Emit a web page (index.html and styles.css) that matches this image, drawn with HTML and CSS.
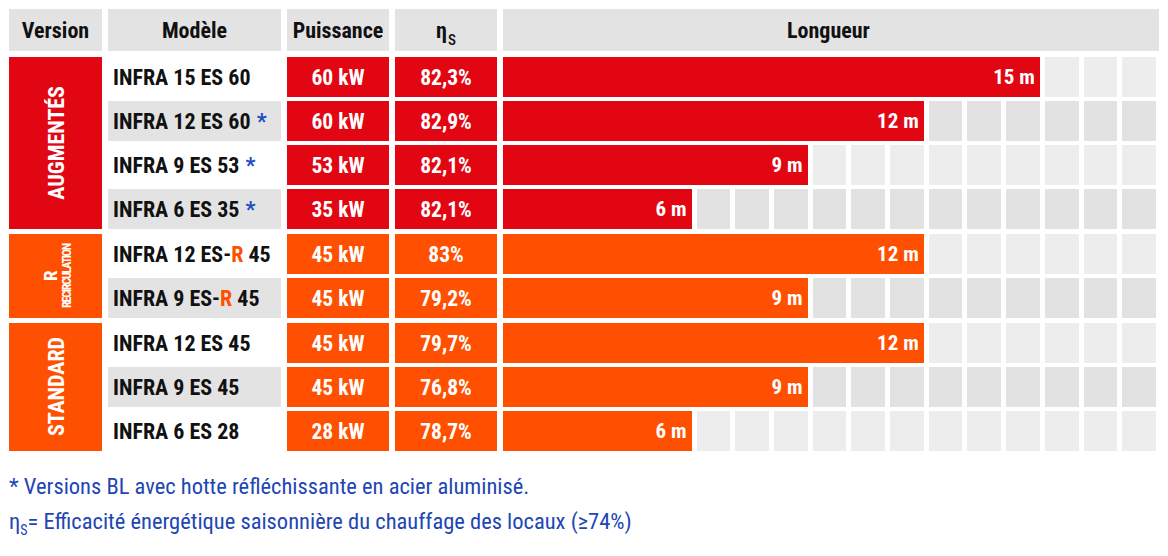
FILE: index.html
```html
<!DOCTYPE html>
<html lang="fr">
<head>
<meta charset="utf-8">
<title>Gamme INFRA ES</title>
<link rel="stylesheet" href="styles.css">
</head>
<body>
<div class="table">
  <div class="row head">
    <div class="hcell">Version</div>
    <div class="hcell">Modèle</div>
    <div class="hcell">Puissance</div>
    <div class="hcell"><span>η<sub>S</sub></span></div>
    <div class="hcell">Longueur</div>
  </div>

  <div class="group red rows4">
    <div class="version"><span class="vlabel">AUGMENTÉS</span></div>

    <div class="model">INFRA 15 ES 60</div>
    <div class="val">60 kW</div>
    <div class="val">82,3%</div>
    <div class="len">
      <div class="bar m15">15 m</div>
      <div class="sq"></div><div class="sq"></div><div class="sq"></div>
    </div>

    <div class="model alt">INFRA 12 ES 60 <span class="star">*</span></div>
    <div class="val">60 kW</div>
    <div class="val">82,9%</div>
    <div class="len alt">
      <div class="bar m12">12 m</div>
      <div class="sq"></div><div class="sq"></div><div class="sq"></div><div class="sq"></div><div class="sq"></div><div class="sq"></div>
    </div>

    <div class="model">INFRA 9 ES 53 <span class="star">*</span></div>
    <div class="val">53 kW</div>
    <div class="val">82,1%</div>
    <div class="len">
      <div class="bar m9">9 m</div>
      <div class="sq"></div><div class="sq"></div><div class="sq"></div><div class="sq"></div><div class="sq"></div><div class="sq"></div><div class="sq"></div><div class="sq"></div><div class="sq"></div>
    </div>

    <div class="model alt">INFRA 6 ES 35 <span class="star">*</span></div>
    <div class="val">35 kW</div>
    <div class="val">82,1%</div>
    <div class="len alt">
      <div class="bar m6">6 m</div>
      <div class="sq"></div><div class="sq"></div><div class="sq"></div><div class="sq"></div><div class="sq"></div><div class="sq"></div><div class="sq"></div><div class="sq"></div><div class="sq"></div><div class="sq"></div><div class="sq"></div><div class="sq"></div>
    </div>
  </div>

  <div class="group orange rows2">
    <div class="version"><span class="vlabel vr"><span class="r-big">R</span><span class="r-small">RECIRCULATION</span></span></div>

    <div class="model">INFRA 12 ES-<span class="rmark">R</span> 45</div>
    <div class="val">45 kW</div>
    <div class="val">83%</div>
    <div class="len">
      <div class="bar m12">12 m</div>
      <div class="sq"></div><div class="sq"></div><div class="sq"></div><div class="sq"></div><div class="sq"></div><div class="sq"></div>
    </div>

    <div class="model alt">INFRA 9 ES-<span class="rmark">R</span> 45</div>
    <div class="val">45 kW</div>
    <div class="val">79,2%</div>
    <div class="len alt">
      <div class="bar m9">9 m</div>
      <div class="sq"></div><div class="sq"></div><div class="sq"></div><div class="sq"></div><div class="sq"></div><div class="sq"></div><div class="sq"></div><div class="sq"></div><div class="sq"></div>
    </div>
  </div>

  <div class="group orange rows3">
    <div class="version"><span class="vlabel">STANDARD</span></div>

    <div class="model">INFRA 12 ES 45</div>
    <div class="val">45 kW</div>
    <div class="val">79,7%</div>
    <div class="len">
      <div class="bar m12">12 m</div>
      <div class="sq"></div><div class="sq"></div><div class="sq"></div><div class="sq"></div><div class="sq"></div><div class="sq"></div>
    </div>

    <div class="model alt">INFRA 9 ES 45</div>
    <div class="val">45 kW</div>
    <div class="val">76,8%</div>
    <div class="len alt">
      <div class="bar m9">9 m</div>
      <div class="sq"></div><div class="sq"></div><div class="sq"></div><div class="sq"></div><div class="sq"></div><div class="sq"></div><div class="sq"></div><div class="sq"></div><div class="sq"></div>
    </div>

    <div class="model">INFRA 6 ES 28</div>
    <div class="val">28 kW</div>
    <div class="val">78,7%</div>
    <div class="len">
      <div class="bar m6">6 m</div>
      <div class="sq"></div><div class="sq"></div><div class="sq"></div><div class="sq"></div><div class="sq"></div><div class="sq"></div><div class="sq"></div><div class="sq"></div><div class="sq"></div><div class="sq"></div><div class="sq"></div><div class="sq"></div>
    </div>
  </div>
</div>

<div class="notes">
  <p>* Versions BL avec hotte réfléchissante en acier aluminisé.</p>
  <p>η<sub>S</sub>= Efficacité énergétique saisonnière du chauffage des locaux (≥74%)</p>
</div>
</body>
</html>
```

FILE: styles.css
```css
* { box-sizing: border-box; }

html, body {
  margin: 0;
  padding: 0;
  background: #ffffff;
}

body {
  padding: 9px 0 0 9px;
  font-family: "Roboto Condensed", "Liberation Sans Narrow", "Arial Narrow", Roboto, "Liberation Sans", sans-serif;
  font-stretch: 75%;
  color: #000000;
}

.table {
  display: flex;
  flex-direction: column;
  gap: 5px;
  width: 1150px;
}

.row,
.group {
  display: grid;
  grid-template-columns: 93px 173px 102px 102px 656px;
  column-gap: 6px;
}

.head {
  height: 42px;
  margin-bottom: 1px;
}

.hcell {
  background: #e3e3e3;
  display: flex;
  align-items: center;
  justify-content: center;
  font-weight: 700;
  font-size: 22px;
  color: #111111;
}

.hcell:last-child {
  justify-content: flex-start;
  padding-left: 284px;
}

.hcell sub {
  font-size: 15px;
  font-weight: 500;
  vertical-align: -7px;
  line-height: 0;
  margin-left: 1px;
}

.group {
  row-gap: 4px;
}

.rows4 { grid-template-rows: repeat(4, 40px); }
.rows2 { grid-template-rows: repeat(2, 40px); }
.rows3 { grid-template-rows: repeat(3, 40px); }

.version {
  grid-column: 1;
  grid-row: 1 / -1;
  display: flex;
  align-items: center;
  justify-content: center;
  color: #ffffff;
}

.red .version,
.red .val,
.red .bar { background: #e20613; }

.orange .version,
.orange .val,
.orange .bar { background: #fe5000; }

.vlabel {
  writing-mode: vertical-rl;
  transform: rotate(180deg);
  font-weight: 700;
  font-size: 22px;
  line-height: 1;
  margin-left: 3px;
}

.vr {
  display: flex;
  flex-direction: column;
  align-items: center;
  margin-left: 2px;
}

.r-big {
  font-size: 19px;
  line-height: 20px;
}

.r-small {
  font-size: 12px;
  line-height: 12px;
  font-weight: 700;
  letter-spacing: -1.2px;
}

.model {
  grid-column: 2;
  display: flex;
  align-items: center;
  padding-left: 5px;
  font-weight: 700;
  font-size: 22px;
  color: #111111;
  white-space: pre;
}

.model.alt { background: #e3e3e3; }

.star {
  color: #1f4fc0;
  margin-left: 1px;
}

.rmark { color: #fe5000; }

.val {
  display: flex;
  align-items: center;
  justify-content: center;
  color: #ffffff;
  font-weight: 700;
  font-size: 21.5px;
}

.len {
  display: grid;
  grid-template-columns: repeat(17, 1fr);
  column-gap: 5px;
  width: 653px;
}

.sq { background: #ededed; }
.len.alt .sq { background: #e2e2e2; }

.bar {
  display: flex;
  align-items: center;
  justify-content: flex-end;
  padding-right: 5px;
  color: #ffffff;
  font-weight: 700;
  font-size: 21px;
}

.bar.m6 { grid-column: span 5; }
.bar.m9 { grid-column: span 8; }
.bar.m12 { grid-column: span 11; }
.bar.m15 { grid-column: span 14; }

.notes {
  margin-top: 23px;
  color: #2146b4;
  font-size: 22.5px;
}

.notes p {
  margin: 0 0 10px 0;
  line-height: 25px;
}

.notes sub {
  font-size: 14px;
  vertical-align: -6px;
  line-height: 0;
}
```
